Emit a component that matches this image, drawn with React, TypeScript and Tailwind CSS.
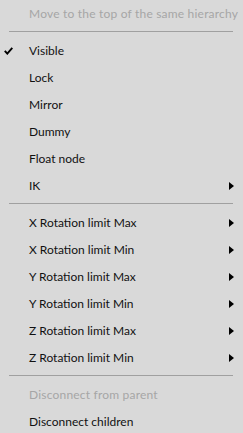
import React from "react";

type Item =
  | { kind: "sep" }
  | { kind: "item"; label: string; disabled?: boolean; checked?: boolean; sub?: boolean };

const items: Item[] = [
  { kind: "item", label: "Move to the top of the same hierarchy", disabled: true },
  { kind: "sep" },
  { kind: "item", label: "Visible", checked: true },
  { kind: "item", label: "Lock" },
  { kind: "item", label: "Mirror" },
  { kind: "item", label: "Dummy" },
  { kind: "item", label: "Float node" },
  { kind: "item", label: "IK", sub: true },
  { kind: "sep" },
  { kind: "item", label: "X Rotation limit Max", sub: true },
  { kind: "item", label: "X Rotation limit Min", sub: true },
  { kind: "item", label: "Y Rotation limit Max", sub: true },
  { kind: "item", label: "Y Rotation limit Min", sub: true },
  { kind: "item", label: "Z Rotation limit Max", sub: true },
  { kind: "item", label: "Z Rotation limit Min", sub: true },
  { kind: "sep" },
  { kind: "item", label: "Disconnect from parent", disabled: true },
  { kind: "item", label: "Disconnect children" },
];

const Check = () => (
  <svg width="9" height="8" viewBox="0 0 9 8" className="block">
    <path d="M0.8 3.8 L3.3 6.6 L8.3 0.8" fill="none" stroke="#000" strokeWidth="1.9" />
  </svg>
);

const Arrow = () => (
  <svg width="5" height="8" viewBox="0 0 5 8" className="block">
    <path d="M0 0 L5 4 L0 8 Z" fill="#000" />
  </svg>
);

export default function App() {
  return (
    <div
      className="w-[243px] h-[433px] overflow-hidden bg-[#d9d9d9] text-[12px] text-[#111]"
      style={{ fontFamily: 'Lato, "Noto Sans", sans-serif' }}
    >
      {items.map((it, i) =>
        it.kind === "sep" ? (
          <div key={i} className="h-[10px] flex items-center pl-[9px] pr-[10px]">
            <div className="h-px w-full bg-[#a0a0a0] -mt-[2px]" />
          </div>
        ) : (
          <div key={i} className="h-[27px] flex items-center">
            <div className="w-[29px] shrink-0 flex pl-[4px]">{it.checked && <Check />}</div>
            <div
              className={`flex-1 min-w-0 whitespace-nowrap pt-[1px] ${
                it.disabled ? "text-[#a6a6a6] tracking-[0.2px]" : ""
              }`}
            >
              {it.label}
            </div>
            <div className="w-[14px] shrink-0 pr-[7px]">{it.sub && <Arrow />}</div>
          </div>
        )
      )}
    </div>
  );
}
